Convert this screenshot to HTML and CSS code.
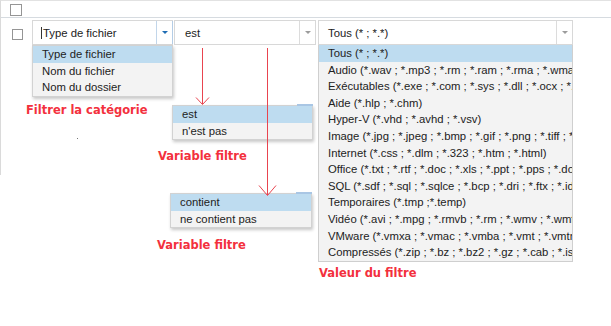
FILE: index.html
```html
<!doctype html>
<html lang="fr">
<head>
    <meta charset="utf-8">
    <title>Filtre des fichiers</title>
    <link rel="stylesheet" href="styles.css">
</head>
<body>
    <div class="page">
        <div class="grid">
            <div class="grid-head"><span class="check"></span></div>
            <div class="grid-row">
                <span class="check check-row"></span>

                <div class="combo combo-type">
                    <span class="combo-text"><span class="caret"></span>Type de fichier</span>
                    <span class="combo-btn combo-btn-focus"><span class="arrow arrow-blue"></span></span>
                    <ul class="menu">
                        <li class="selected">Type de fichier</li>
                        <li>Nom du fichier</li>
                        <li>Nom du dossier</li>
                    </ul>
                </div>

                <div class="combo combo-op">
                    <span class="combo-text">est</span>
                    <span class="combo-btn"><span class="arrow"></span></span>
                </div>

                <div class="combo combo-value">
                    <span class="combo-text">Tous (* ; *.*)</span>
                    <span class="combo-btn"><span class="arrow"></span></span>
                    <ul class="menu menu-values">
                        <li class="selected">Tous (* ; *.*)</li>
                        <li>Audio (*.wav ; *.mp3 ; *.rm ; *.ram ; *.rma ; *.wma ; *.mid)</li>
                        <li>Exécutables (*.exe ; *.com ; *.sys ; *.dll ; *.ocx ; *.bat)</li>
                        <li>Aide (*.hlp ; *.chm)</li>
                        <li>Hyper-V (*.vhd ; *.avhd ; *.vsv)</li>
                        <li>Image (*.jpg ; *.jpeg ; *.bmp ; *.gif ; *.png ; *.tiff ; *.ico)</li>
                        <li>Internet (*.css ; *.dlm ; *.323 ; *.htm ; *.html)</li>
                        <li>Office (*.txt ; *.rtf ; *.doc ; *.xls ; *.ppt ; *.pps ; *.docx)</li>
                        <li>SQL (*.sdf ; *.sql ; *.sqlce ; *.bcp ; *.dri ; *.ftx ; *.idx)</li>
                        <li>Temporaires (*.tmp ;*.temp)</li>
                        <li>Vidéo (*.avi ; *.mpg ; *.rmvb ; *.rm ; *.wmv ; *.wmf)</li>
                        <li>VMware (*.vmxa ; *.vmac ; *.vmba ; *.vmt ; *.vmtm)</li>
                        <li>Compressés (*.zip ; *.bz ; *.bz2 ; *.gz ; *.cab ; *.iso)</li>
                    </ul>
                </div>
            </div>
        </div>

        <!-- annotations -->
        <ul class="menu menu-op">
            <li class="selected">est</li>
            <li>n'est pas</li>
        </ul>
        <ul class="menu menu-match">
            <li class="selected">contient</li>
            <li>ne contient pas</li>
        </ul>

        <svg class="arrows" width="611" height="326">
            <line x1="202.5" y1="48" x2="202.5" y2="104" />
            <polyline points="196,97.5 202.5,104.5 209,97.5" />
            <line x1="267.5" y1="48" x2="267.5" y2="195" />
            <polyline points="259,185.5 267.5,195.5 276,185.5" />
        </svg>

        <span class="note note-category">Filtrer la catégorie</span>
        <span class="note note-op">Variable filtre</span>
        <span class="note note-match">Variable filtre</span>
        <span class="note note-value">Valeur du filtre</span>
        <span class="dot"></span>
    </div>
</body>
</html>
```

FILE: styles.css
```css
body {
    margin: 0;
    background: #fff;
    color: #222;
    font-family: "Liberation Sans", Arial, sans-serif;
    font-size: 11.3px;
}

.page {
    position: relative;
    width: 611px;
    height: 326px;
    overflow: hidden;
}

/* grid */
.grid {
    box-sizing: border-box;
    height: 175px;
    border-left: 1px solid #dadada;
    border-top: 1px solid #e2e2e2;
}

.grid-head {
    box-sizing: border-box;
    height: 17px;
    padding: 3px 0 0 9px;
    border-bottom: 1px solid #d6dbe0;
}

.check {
    display: block;
    box-sizing: border-box;
    width: 12px;
    height: 12px;
    border: 1px solid #959595;
    background: #fff;
}

.grid-row {
    display: flex;
    align-items: flex-start;
    padding-top: 2px;
}

.check-row {
    width: 11px;
    height: 11px;
    margin: 9px 9px 0 11px;
}

/* combos */
.combo {
    position: relative;
    display: flex;
    box-sizing: border-box;
    height: 25px;
    border: 1px solid #d8d8d8;
    background: #fff;
}

.combo-type  { width: 141px; }
.combo-op    { width: 142px; margin-left: 1px; }
.combo-value { width: 255px; margin-left: 2px; }

.combo-text {
    flex: 1;
    display: flex;
    align-items: center;
    padding-left: 10px;
    white-space: nowrap;
}

.combo-type .combo-text { padding-left: 8px; }
.combo-value .combo-text { padding-left: 9px; }

.caret {
    width: 1px;
    height: 12px;
    margin-right: 1px;
    background: #333;
}

.combo-btn {
    display: flex;
    align-items: center;
    justify-content: center;
    box-sizing: border-box;
    width: 16px;
    border-left: 1px solid #dcdcdc;
}

.combo-btn-focus {
    border-left-color: #c2d6ea;
    box-shadow: 1px 0 0 #b4cde6;
}

.arrow {
    width: 0;
    height: 0;
    border-left: 3.5px solid transparent;
    border-right: 3.5px solid transparent;
    border-top: 3.5px solid #9c9c9c;
}

.arrow-blue { border-top-color: #1f6db4; }

/* dropdown menus */
.menu {
    position: absolute;
    margin: 0;
    padding: 0;
    list-style: none;
    background: #f3f3f3;
    border: 1px solid #d2d2d2;
    box-shadow: 1px 2px 3px rgba(0,0,0,.22);
    z-index: 2;
}

.menu li {
    height: 16.6px;
    line-height: 16.6px;
    padding-left: 9px;
    white-space: nowrap;
    overflow: hidden;
}

.menu li.selected { background: #bedcf0; }

.combo .menu {
    top: 24px;
    left: -1px;
    right: -1px;
}

.menu-values {
    box-shadow: none;
    border-color: #cfcfcf;
    border-top: 0;
}

.menu-op {
    left: 172px;
    top: 105px;
    width: 139px;
}

.menu-match {
    left: 170px;
    top: 193px;
    width: 140px;
}

.menu-op::before,
.menu-match::before {
    content: "";
    position: absolute;
    top: -2px;
    right: -1px;
    width: 16px;
    height: 2px;
    background: #a9c6e4;
}

/* annotations */
.arrows {
    position: absolute;
    left: 0;
    top: 0;
    z-index: 3;
    pointer-events: none;
}

.arrows line,
.arrows polyline {
    fill: none;
    stroke: #e9444f;
    stroke-width: 1;
}

.note {
    position: absolute;
    color: #f3303d;
    font-family: "DejaVu Sans", Verdana, sans-serif;
    font-weight: bold;
    font-size: 11.5px;
    line-height: 13px;
    white-space: nowrap;
}

.note-category { left: 26px;  top: 104px; }
.note-op       { left: 158px; top: 150px; }
.note-match    { left: 157px; top: 239px; }
.note-value    { left: 319px; top: 267px; }

.dot {
    position: absolute;
    left: 77px;
    top: 138px;
    width: 1px;
    height: 1px;
    background: #777;
}
```
